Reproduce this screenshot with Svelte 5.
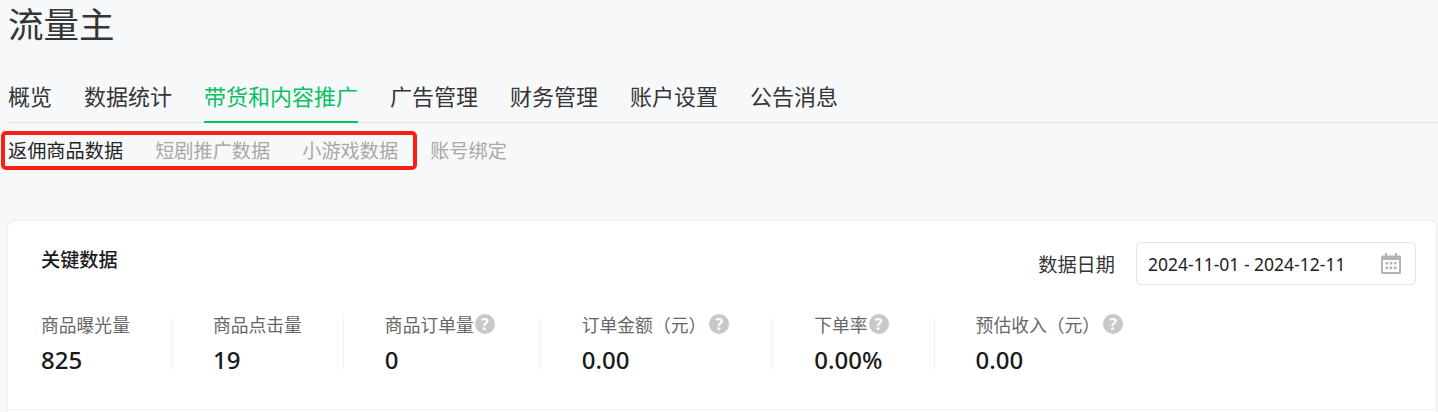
<script lang="ts">
	const tabs = ['概览', '数据统计', '带货和内容推广', '广告管理', '财务管理', '账户设置', '公告消息'];
	const subTabs = ['返佣商品数据', '短剧推广数据', '小游戏数据', '账号绑定'];
	const stats = [
		{ label: '商品曝光量', value: '825' },
		{ label: '商品点击量', value: '19' },
		{ label: '商品订单量', value: '0', help: 'tight' },
		{ label: '订单金额（元）', value: '0.00', help: 'wide' },
		{ label: '下单率', value: '0.00%', help: 'tight' },
		{ label: '预估收入（元）', value: '0.00', help: 'wide' }
	];
</script>

<div class="page">
	<h1 class="title">流量主</h1>

	<nav class="tabs">
		{#each tabs as tab, i}
			<span class="tab" class:active={i === 2}>{tab}</span>
		{/each}
	</nav>

	<nav class="sub-tabs">
		{#each subTabs as tab, i}
			<span class="sub-tab" class:active={i === 0}>{tab}</span>
		{/each}
		<div class="highlight"></div>
	</nav>

	<section class="card">
		<header class="card-head">
			<h2 class="card-title">关键数据</h2>
			<div class="date">
				<span class="date-label">数据日期</span>
				<div class="date-input">
					<span>2024-11-01 - 2024-12-11</span>
					<svg width="20" height="21" viewBox="0 0 20 21" fill="#b4b4b4" aria-hidden="true">
						<path
							fill-rule="evenodd"
							d="M4 0h2v2.5h8V0h2v2.5h2.6c.8 0 1.4.6 1.4 1.4v15.7c0 .8-.6 1.4-1.4 1.4H1.4C.6 21 0 20.4 0 19.6V3.9c0-.8.6-1.4 1.4-1.4H4zM2 7v12h16V7z"
						/>
						<path
							d="M4.5 9h2.6v2.6H4.5zM8.7 9h2.6v2.6H8.7zM12.9 9h2.6v2.6h-2.6zM4.5 13.6h2.6v2.6H4.5zM8.7 13.6h2.6v2.6H8.7zM12.9 13.6h2.6v2.6h-2.6z"
						/>
					</svg>
				</div>
			</div>
		</header>

		<div class="stats">
			{#each stats as stat}
				<div class="stat">
					<div class="stat-label">
						{stat.label}
						{#if stat.help}
							<span class="help" class:wide={stat.help === 'wide'}>?</span>
						{/if}
					</div>
					<div class="stat-value">{stat.value}</div>
				</div>
			{/each}
		</div>
	</section>
</div>

<style>
	:global(body) {
		margin: 0;
		background: #f7f8fa;
		font-family: 'Noto Sans', 'Noto Sans CJK SC', sans-serif;
		overflow: hidden;
	}

	.page {
		height: 412px;
		padding: 0 1px 0 8px;
		box-sizing: border-box;
		overflow: hidden;
		color: #353535;
	}

	.title {
		margin: 0;
		height: 73px;
		font-size: 35.5px;
		line-height: 48px;
		font-weight: 400;
	}

	.tabs {
		display: flex;
		gap: 32px;
		height: 50px;
		box-sizing: border-box;
		border-bottom: 1px solid #e1e2e4;
		margin-right: -1px;
	}

	.tab {
		height: 50px;
		box-sizing: border-box;
		font-size: 22px;
		line-height: 46px;
	}

	.tab.active {
		color: #07c160;
		border-bottom: 2px solid #07c160;
	}

	.sub-tabs {
		position: relative;
		display: flex;
		gap: 32px;
		height: 97px;
		padding-top: 13px;
		box-sizing: border-box;
		font-size: 19.2px;
		line-height: 29px;
	}

	.sub-tab {
		color: #a8a8a8;
	}

	.sub-tab.active {
		color: #252525;
	}

	.highlight {
		position: absolute;
		left: -7px;
		top: 8px;
		width: 416px;
		height: 39px;
		box-sizing: border-box;
		border: 4px solid #fa1e14;
		border-radius: 5px;
		pointer-events: none;
	}

	.card {
		height: 240px;
		margin-left: -1px;
		padding: 0 20px 0 33px;
		box-sizing: border-box;
		background: #fff;
		border: 1px solid #eeeeee;
		border-radius: 8px;
	}

	.card-head {
		display: flex;
		justify-content: space-between;
		align-items: flex-start;
		padding-top: 21px;
	}

	.card-title {
		margin: 0;
		font-size: 19.2px;
		line-height: 36px;
		font-weight: 500;
		color: #1c1c1c;
	}

	.date {
		display: flex;
		align-items: center;
		gap: 21px;
	}

	.date-label {
		font-size: 19.2px;
	}

	.date-input {
		display: flex;
		align-items: center;
		justify-content: space-between;
		width: 280px;
		height: 43px;
		padding: 0 14px 0 11px;
		box-sizing: border-box;
		border: 1px solid #e3e3e3;
		border-radius: 5px;
		font-size: 17.5px;
		color: #222;
	}

	.stats {
		display: flex;
		margin: 32px -20px 0 -33px;
		padding-left: 33px;
		height: 92px;
		border-bottom: 1px solid #f0f0f0;
	}

	.stat {
		padding-right: 41px;
		margin-right: 41px;
		height: 52px;
		border-right: 1px solid #f0f0f0;
	}

	.stat:last-child {
		border-right: 0;
	}

	.stat-label {
		display: flex;
		align-items: center;
		height: 16px;
		font-size: 17.8px;
		line-height: 16px;
		color: #666;
		white-space: nowrap;
	}

	.stat-value {
		margin-top: 11px;
		font-size: 24px;
		line-height: 32px;
		font-weight: 500;
		color: #1a1a1a;
	}

	.help {
		display: inline-flex;
		align-items: center;
		justify-content: center;
		width: 20px;
		height: 20px;
		margin: -2px 4px 0 1px;
		border-radius: 50%;
		background: #c8c8c8;
		color: #fff;
		font-size: 16px;
		font-weight: 700;
		line-height: 1;
	}

	.help.wide {
		margin: -2px 2px 0 3px;
	}
</style>
